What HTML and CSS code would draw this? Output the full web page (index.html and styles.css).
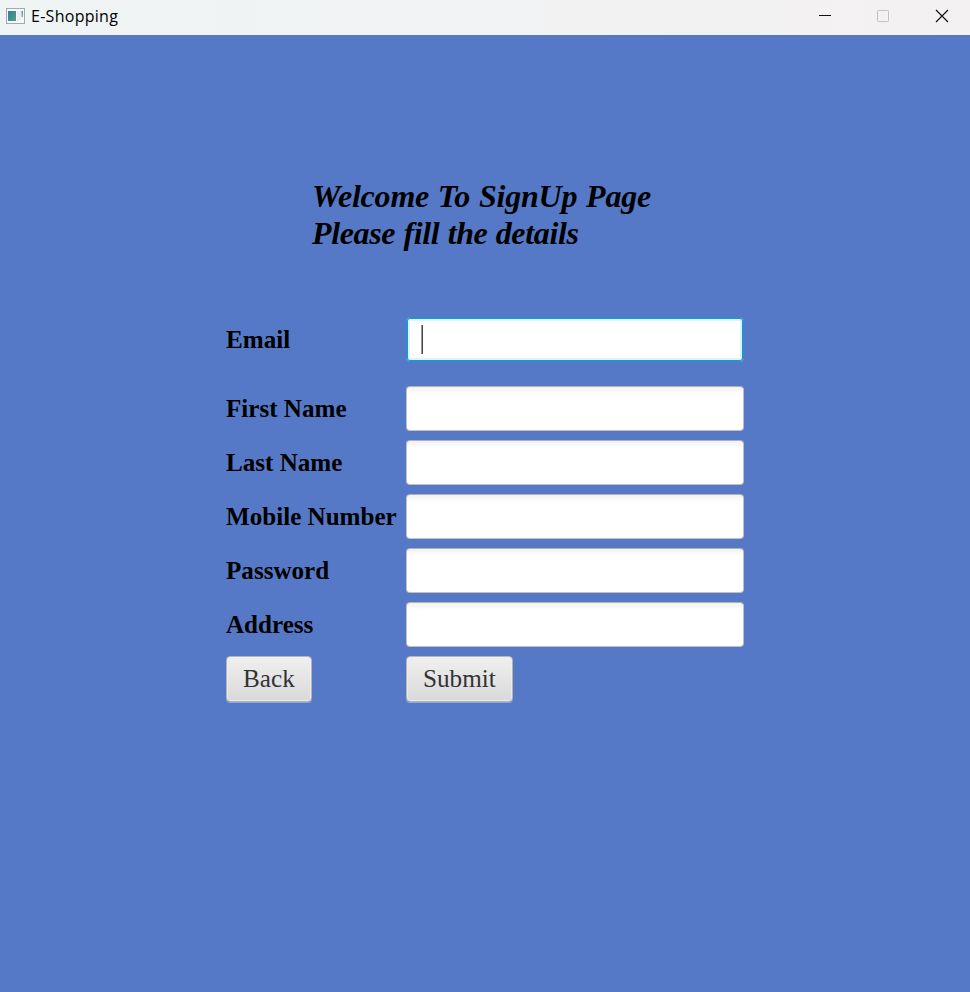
FILE: index.html
```html
<!DOCTYPE html>
<html lang="en">
<head>
<meta charset="utf-8">
<title>E-Shopping</title>
<link rel="stylesheet" href="styles.css">
</head>
<body>
<header class="titlebar">
  <svg class="app-icon" width="19" height="16" viewBox="0 0 19 16">
    <defs>
      <linearGradient id="pane" x1="0" y1="0" x2="1" y2="1"><stop offset="0" stop-color="#3b78a0"/><stop offset="1" stop-color="#4fa57c"/></linearGradient>
      <linearGradient id="side" x1="0" y1="0" x2="0" y2="1"><stop offset="0" stop-color="#5a8fc0"/><stop offset="1" stop-color="#7cc48c"/></linearGradient>
    </defs>
    <rect x=".5" y=".5" width="18" height="15" fill="#f7f7f9" stroke="#a3a9b0"/>
    <rect x="2" y="3" width="8" height="10" fill="url(#pane)"/>
    <rect x="11" y="3" width="4" height="10" fill="#eceef3"/>
    <rect x="15.5" y="3" width="1.5" height="6" fill="url(#side)"/>
  </svg>
  <span class="title">E-Shopping</span>
  <div class="controls">
    <svg width="14" height="14" viewBox="0 0 14 14"><path d="M0 6.5H12" stroke="#111"/></svg>
    <svg width="14" height="14" viewBox="0 0 14 14"><rect x=".5" y="1.5" width="11" height="11" rx="1" fill="none" stroke="#c2c0c1"/></svg>
    <svg width="14" height="14" viewBox="0 0 14 14"><path d="M1 1L13 13M13 1L1 13" stroke="#111" stroke-width="1.2"/></svg>
  </div>
</header>
<main class="page">
  <h1 class="heading"><span class="line-one">Welcome To SignUp Page</span><span class="line-two">Please fill the details</span></h1>
  <form class="form">
    <label class="first">Email</label><div class="field focused first"><span class="caret"></span></div>
    <label>First Name</label><div class="field"></div>
    <label>Last Name</label><div class="field"></div>
    <label>Mobile Number</label><div class="field"></div>
    <label>Password</label><div class="field"></div>
    <label>Address</label><div class="field"></div>
    <button type="button">Back</button><button type="button">Submit</button>
  </form>
</main>
</body>
</html>
```
FILE: styles.css
```css
* { box-sizing: border-box; }
body { margin: 0; height: 992px; background: #5579c6; font-family: "Liberation Serif", serif; color: #000; overflow: hidden; }
.titlebar { height: 35px; display: flex; align-items: center; padding: 0 15px 3px 6px; background: linear-gradient(90deg, #eff4f5, #f4f1f2); font-family: "Open Sans", sans-serif; }
.title { margin-left: 6px; font-size: 16px; letter-spacing: .28px; }
.controls { display: flex; gap: 44px; margin-left: auto; padding-right: 6px; }
.page { padding-top: 143px; }
.heading { margin: 0 0 0 312px; font-size: 32px; line-height: 37px; font-style: italic; font-weight: bold; }
.heading span { display: block; }
.line-one { letter-spacing: -.2px; word-spacing: 1px; }
.line-two { letter-spacing: -.35px; word-spacing: .6px; }
.form { display: grid; grid-template-columns: 170px 338px; column-gap: 10px; row-gap: 9px; margin: 65px 0 0 226px; align-items: center; }
.form label { font-size: 25.1px; line-height: 28px; font-weight: bold; white-space: nowrap; }
.field { height: 45px; background: linear-gradient(#f1f1f1, #fff 7px); border: 1px solid #c1bfc0; border-top-color: #b3b1b2; border-radius: 4px; }
.form .first { margin-bottom: 15px; }
.form .focused { background: #fff; border: 1px solid #3888cb; box-shadow: inset 0 0 0 1px #0f9bd3, inset 0 0 0 3px #dff3fa; }
.caret { display: block; width: 1px; height: 29px; margin: 7px 0 0 15px; background: #444; box-shadow: -1px 0 #999; }
button { justify-self: start; height: 46px; padding: 0 16px 1px; font: 25.2px "Liberation Serif", serif; color: #333; border: 1px solid #b5b5b5; border-radius: 4px; background: linear-gradient(#efefef, #d9d9d9); box-shadow: inset 0 0 0 1px #f0f0f0aa, 0 1px #ffffff55; }
```
